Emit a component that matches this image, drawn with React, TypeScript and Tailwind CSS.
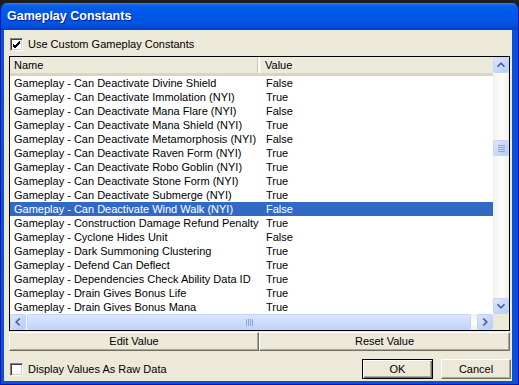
import React from 'react';

const rows: [string, string][] = [
  ['Gameplay - Can Deactivate Divine Shield', 'False'],
  ['Gameplay - Can Deactivate Immolation (NYI)', 'True'],
  ['Gameplay - Can Deactivate Mana Flare (NYI)', 'False'],
  ['Gameplay - Can Deactivate Mana Shield (NYI)', 'True'],
  ['Gameplay - Can Deactivate Metamorphosis (NYI)', 'False'],
  ['Gameplay - Can Deactivate Raven Form (NYI)', 'True'],
  ['Gameplay - Can Deactivate Robo Goblin (NYI)', 'True'],
  ['Gameplay - Can Deactivate Stone Form (NYI)', 'True'],
  ['Gameplay - Can Deactivate Submerge (NYI)', 'True'],
  ['Gameplay - Can Deactivate Wind Walk (NYI)', 'False'],
  ['Gameplay - Construction Damage Refund Penalty', 'True'],
  ['Gameplay - Cyclone Hides Unit', 'False'],
  ['Gameplay - Dark Summoning Clustering', 'True'],
  ['Gameplay - Defend Can Deflect', 'True'],
  ['Gameplay - Dependencies Check Ability Data ID', 'True'],
  ['Gameplay - Drain Gives Bonus Life', 'True'],
  ['Gameplay - Drain Gives Bonus Mana', 'True'],
];

const SELECTED = 9;

function Checkbox({ checked }: { checked?: boolean }) {
  return (
    <div className="w-[13px] h-[13px] shrink-0 bg-white border border-t-[#808080] border-l-[#808080] border-b-white border-r-white shadow-[inset_1px_1px_0_#404040,inset_-1px_-1px_0_#d4d0c8] flex items-center justify-center">
      {checked && (
        <svg width="9" height="9" viewBox="0 0 9 9">
          <path d="M1 4 L3 6 L8 1 M1 5 L3 7 L8 2 M1 6 L3 8 L8 3" stroke="#000" strokeWidth="1" fill="none" />
        </svg>
      )}
    </div>
  );
}

function ScrollButton({ dir }: { dir: 'up' | 'down' | 'left' | 'right' }) {
  const pts = {
    up: '4,10 8,6 12,10',
    down: '4,6 8,10 12,6',
    left: '10,4 6,8 10,12',
    right: '6,4 10,8 6,12',
  }[dir];
  return (
    <div className="w-[16px] h-[16px] shrink-0 rounded-[2px] border border-[#c3d3fd] bg-[linear-gradient(135deg,#dde7fe,#b6cbf8)] flex items-center justify-center">
      <svg width="16" height="16" viewBox="0 0 16 16">
        <polyline points={pts} stroke="#4d6185" strokeWidth="2" fill="none" />
      </svg>
    </div>
  );
}

function Button({ label, isDefault, className }: { label: string; isDefault?: boolean; className?: string }) {
  return (
    <div
      className={
        'flex items-center justify-center bg-[#ece9d8] text-black border ' +
        (isDefault
          ? 'border-black shadow-[inset_1px_1px_0_#fff,inset_-1px_-1px_0_#716f64,inset_-2px_-2px_0_#aca899] '
          : 'border-t-white border-l-white border-b-[#716f64] border-r-[#716f64] shadow-[inset_-1px_-1px_0_#aca899] ') +
        (className ?? '')
      }
    >
      {label}
    </div>
  );
}

export default function App() {
  return (
    <div className="w-[519px] h-[385px] bg-[#1e1e1e] pt-[3px] font-['Liberation_Sans',Arial,sans-serif] text-[11px] text-black overflow-hidden">
      <div className="h-[382px] flex flex-col rounded-t-[7px] bg-[#0a4fd9] overflow-hidden border-x border-b border-[#0019a8] border-t-0">
        {/* Title bar */}
        <div className="h-[27px] shrink-0 flex items-center pl-[6px] bg-[linear-gradient(to_bottom,#2c82f6_0%,#0a5fea_10%,#0057e7_35%,#0054e3_75%,#0048d6_92%,#003cc7_100%)]">
          <span className="text-white font-bold text-[12.5px] [text-shadow:1px_1px_0_#0a1e8c]">Gameplay Constants</span>
        </div>

        {/* Body */}
        <div className="h-[351px] ml-[3px] mr-[6px] bg-[#ece9d8] flex flex-col">
          <div className="h-[13px] mt-[8px] ml-[6px] flex items-center gap-[5px]">
            <Checkbox checked />
            <span>Use Custom Gameplay Constants</span>
          </div>

          {/* List view */}
          <div className="mt-[5px] ml-[5px] w-[501px] h-[275px] border border-black bg-white flex flex-col">
            <div className="h-[257px] flex">
              <div className="w-[483px] flex flex-col">
                <div className="h-[19px] shrink-0 flex bg-[#ebeadb] border-b-[3px] border-[#d8d5c5]">
                  <div className="w-[248px] pl-[4px] flex items-center border-r border-[#c7c5b2]">Name</div>
                  <div className="w-[2px] bg-white" />
                  <div className="flex-1 pl-[5px] flex items-center">Value</div>
                </div>
                {rows.map(([name, value], i) => (
                  <div
                    key={name}
                    className={
                      'h-[14px] flex items-center leading-[14px] whitespace-nowrap ' +
                      (i === SELECTED ? 'bg-[#316ac5] text-white' : '')
                    }
                  >
                    <div className="w-[251px] pl-[4px] overflow-hidden">{name}</div>
                    <div className="pl-[5px]">{value}</div>
                  </div>
                ))}
              </div>
              <div className="w-[16px] flex flex-col bg-[linear-gradient(to_right,#f3f1ec,#fefefb_60%,#eeede5)]">
                <ScrollButton dir="up" />
                <div className="h-[67px]" />
                <div className="h-[16px] rounded-[2px] border border-[#c3d3fd] bg-[linear-gradient(135deg,#dde7fe,#b6cbf8)] flex flex-col items-center justify-center gap-[1px]">
                  <div className="w-[7px] h-[1px] bg-[#8ca5ea]" />
                  <div className="w-[7px] h-[1px] bg-[#8ca5ea]" />
                  <div className="w-[7px] h-[1px] bg-[#8ca5ea]" />
                  <div className="w-[7px] h-[1px] bg-[#8ca5ea]" />
                </div>
                <div className="flex-1" />
                <ScrollButton dir="down" />
              </div>
            </div>
            <div className="h-[16px] flex">
              <div className="w-[483px] flex bg-[linear-gradient(to_bottom,#f3f1ec,#fefefb_60%,#eeede5)]">
                <ScrollButton dir="left" />
                <div className="w-[444px] ml-[1px] rounded-[2px] border border-[#c3d3fd] bg-[linear-gradient(to_bottom,#dce6fe,#c1d3fb)] flex items-center justify-center gap-[1px]">
                  <div className="w-[1px] h-[7px] bg-[#8ca5ea]" />
                  <div className="w-[1px] h-[7px] bg-[#8ca5ea]" />
                  <div className="w-[1px] h-[7px] bg-[#8ca5ea]" />
                  <div className="w-[1px] h-[7px] bg-[#8ca5ea]" />
                </div>
                <div className="flex-1" />
                <ScrollButton dir="right" />
              </div>
              <div className="w-[16px] bg-[#ece9d8]" />
            </div>
          </div>

          {/* Edit / Reset */}
          <div className="mt-[1px] ml-[5px] w-[501px] h-[19px] flex">
            <Button label="Edit Value" className="w-[250px]" />
            <Button label="Reset Value" className="flex-1" />
          </div>

          {/* Bottom row */}
          <div className="mt-[8px] ml-[6px] mr-[1px] h-[20px] flex items-center">
            <Checkbox />
            <span className="ml-[5px]">Display Values As Raw Data</span>
            <div className="flex-1" />
            <Button label="OK" isDefault className="w-[71px] h-[20px]" />
            <Button label="Cancel" className="w-[70px] h-[20px] ml-[8px]" />
          </div>
        </div>
      </div>
    </div>
  );
}
